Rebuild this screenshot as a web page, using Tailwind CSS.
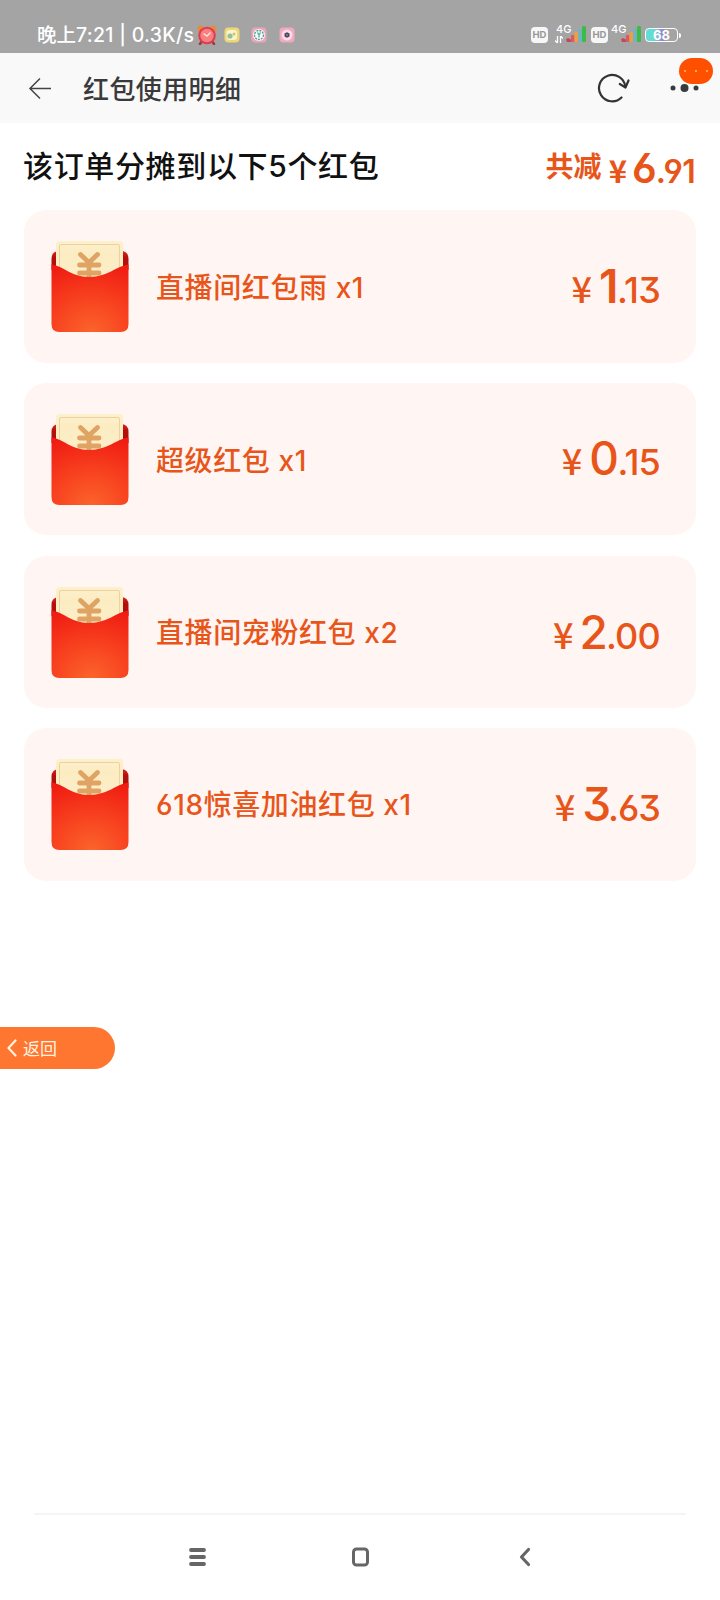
<!DOCTYPE html>
<html lang="zh-CN">
<head>
<meta charset="utf-8">
<title>红包使用明细</title>
<script src="https://cdn.jsdelivr.net/npm/@tailwindcss/browser@4"></script>
</head>
<body class="bg-white">
<svg width="0" height="0" class="absolute">
  <defs>
    <radialGradient id="red" cx="0.52" cy="1" r="1.05"><stop offset="0" stop-color="#fb642b"/><stop offset="0.45" stop-color="#f84420"/><stop offset="1" stop-color="#f01c12"/></radialGradient>
    <linearGradient id="paper" x1="0" y1="0" x2="0" y2="1"><stop offset="0" stop-color="#fdf0cc"/><stop offset="0.3" stop-color="#fcecc2"/><stop offset="1" stop-color="#ffefcb"/></linearGradient>
    <linearGradient id="back" x1="0" y1="0" x2="0" y2="1"><stop offset="0" stop-color="#dd2518"/><stop offset="0.35" stop-color="#b3100c"/><stop offset="1" stop-color="#b30d0b"/></linearGradient>
    <symbol id="envelope" viewBox="0 0 80 94">
      <path d="M1.500 30V19Q1.500 11 9.500 11H70.500Q78.500 11 78.500 19V30Z" fill="url(#back)"/>
      <path d="M6 5Q6 1 10 1H70Q73 1 73 4V45H6Z" fill="url(#paper)"/>
      <path d="M9.5 30V6Q9.5 4.500 11 4.500H68Q69.500 4.500 69.500 6V30" fill="none" stroke="#ead3a0" stroke-width="1"/>
      <path d="M30.500 14.500L39 22.500L47.500 14.500M29.500 25H49M29.500 33H49M39 23V40" fill="none" stroke="#dfa364" stroke-width="4.800" stroke-linecap="round" stroke-linejoin="round"/>
      <path d="M1.500 24.500C14 26 20 36.500 39 37C59 36.500 66 26 78.500 24.500V84Q78.500 92 70.500 92H9.500Q1.500 92 1.500 84Z" fill="url(#red)"/>
    </symbol>
    <symbol id="signal" viewBox="0 0 20 18">
      <path d="M0 14.500L2 13L5 14.500V17H1Z" fill="#c6465c"/>
      <rect x="5" y="10" width="3.500" height="7" rx="1" fill="#d95b61"/>
      <rect x="8.500" y="7" width="3.500" height="10" rx="1" fill="#ef9f3f"/>
      <rect x="12.200" y="4" width="3.500" height="13" rx="1" fill="#6bb3c9"/>
      <rect x="16" y="1" width="4" height="16" rx="1.500" fill="#3cbb45"/>
    </symbol>
  </defs>
</svg>
<div class="w-[720px] h-[1600px] flex flex-col overflow-hidden whitespace-nowrap font-['Inter','Noto_Sans_CJK_SC',sans-serif]">
  <!-- status bar -->
  <div class="h-[53px] bg-[#a4a4a4] flex items-center pt-[17px] pl-[37px] pr-[39px] text-white shrink-0">
    <div class="w-[160px] text-[19.5px] leading-[30px] pb-px font-medium font-['Noto_Sans_CJK_SC',sans-serif]"><span>晚上</span><span class="font-['Inter'] text-[19.5px] tracking-[0.300px]">7:21 | 0.3K/s</span></div>
    <svg class="w-5 h-5" viewBox="0 0 20 20"><circle cx="4" cy="4" r="3.500" fill="#e58a45"/><circle cx="16" cy="4" r="3.500" fill="#e58a45"/><path d="M5 16L3 19M15 16L17 19" stroke="#9c3a3c" stroke-width="2.500" stroke-linecap="round"/><circle cx="10" cy="10.500" r="8.800" fill="#dc3f49"/><circle cx="10" cy="10.500" r="6.700" fill="#fa7f83"/><path d="M6.500 8.500L10 11L13.500 7.500" fill="none" stroke="#ffe3d8" stroke-width="1.400"/></svg>
    <svg class="w-4 h-4 ml-[7px]" viewBox="0 0 16 16"><rect x=".5" y=".5" width="15" height="15" rx="4" fill="#ecd779"/><rect x="2.500" y="3" width="10.500" height="10" rx="3" fill="#fbf4c4"/><circle cx="6" cy="9" r="2.600" fill="#97bd9f"/><circle cx="10" cy="7" r="1.500" fill="#b9c98c"/></svg>
    <svg class="w-4 h-4 ml-[11px]" viewBox="0 0 16 16"><rect x=".5" y=".5" width="15" height="15" rx="4" fill="#e9a6bd"/><circle cx="8" cy="8" r="6" fill="#f7f8f7"/><circle cx="8" cy="8" r="4.500" fill="none" stroke="#68998f" stroke-width="1.400" stroke-dasharray="2 1"/><path d="M6.500 5.500L8 8L9.500 5.500M8 8V10.500" fill="none" stroke="#46b7a7" stroke-width="1.400"/></svg>
    <svg class="w-4 h-4 ml-[12px]" viewBox="0 0 16 16"><rect x=".5" y=".5" width="15" height="15" rx="4" fill="#f2a8bf"/><circle cx="8" cy="8" r="5.500" fill="#fbdde8"/><path d="M8 5.200L10.500 6.500V9.500L8 10.800L5.500 9.500V6.500Z" fill="#514263"/><circle cx="8" cy="8" r=".7" fill="#d9bddc"/></svg>
    <div class="ml-auto w-[17px] h-[16px] rounded-[4px] bg-[#f7f7f7] text-[#999] text-[9.500px] leading-[16px] text-center font-bold">HD</div>
    <div class="ml-[7px] w-[31px] h-[18px] relative shrink-0">
      <svg class="absolute right-0 bottom-[1px] w-5 h-[18px]"><use href="#signal"/></svg>
      <svg class="absolute left-0 bottom-[1px] w-2 h-[7px]" viewBox="0 0 8 7"><path d="M2.500 0V7L0 4.500M5.500 7V0L8 2.500" fill="none" stroke="#fff" stroke-width="1.300"/></svg>
      <span class="absolute left-[1px] -top-[2px] text-[11px] leading-[11px] font-medium">4G</span>
    </div>
    <div class="ml-[5px] w-[17px] h-[16px] rounded-[4px] bg-[#f7f7f7] text-[#999] text-[9.500px] leading-[16px] text-center font-bold">HD</div>
    <div class="ml-[2px] w-[31px] h-[18px] relative shrink-0">
      <svg class="absolute right-0 bottom-[1px] w-5 h-[18px]"><use href="#signal"/></svg>
      <span class="absolute left-[1px] -top-[2px] text-[11px] leading-[11px] font-medium">4G</span>
    </div>
    <div class="ml-[4px] w-[33px] h-[14px] rounded-[4px] border border-white bg-linear-to-r from-[#63ddd3] from-25% via-[#8f7fd0] via-55% to-[#a4a4a4] to-65% text-[13px] leading-[12px] font-bold text-center">68</div>
    <div class="w-[2px] h-[5px] ml-[1px] bg-white rounded-r"></div>
  </div>
  <!-- title bar -->
  <div class="h-[70px] bg-[#f9f9f9] flex items-center pl-[28px] shrink-0 relative">
    <svg class="w-6 h-6" viewBox="0 0 24 24" fill="none" stroke="#444" stroke-width="1.500"><path d="M23 12.500H2M12 2.500L2 12.500L12 22.500"/></svg>
    <h1 class="ml-[31px] pt-[3px] text-[26px] tracking-[0.400px] leading-[36px] text-[#3a3a3a] font-medium">红包使用明细</h1>
    <svg class="ml-auto mr-[39px] w-[34px] h-[32px]" viewBox="0 0 34 32" fill="none" stroke="#333" stroke-width="2.200" stroke-linecap="round" stroke-linejoin="round"><path d="M24.500 25.500A13.200 13.200 0 1 1 28.300 14.500"/><path d="M22.800 12L28.500 15.500L31.500 8.500"/></svg>
    <svg class="w-[30px] h-[10px] mr-[20px]" viewBox="0 0 30 10" fill="#373b3b"><circle cx="3" cy="5" r="2.500"/><circle cx="14.500" cy="5" r="4"/><circle cx="26" cy="5" r="2.500"/></svg>
    <div class="absolute left-[679px] top-[5px] w-[34px] h-[26px] rounded-full bg-[#ff5000] flex items-center justify-center gap-[9px]"><i class="w-[2px] h-[2px] rounded-full bg-[#ffc66a]"></i><i class="w-[2px] h-[2px] rounded-full bg-[#ffc66a]"></i><i class="w-[2px] h-[2px] rounded-full bg-[#ffc66a]"></i></div>
  </div>
  <!-- summary -->
  <div class="h-[87px] flex items-center justify-between pl-[23px] pr-[25px] shrink-0">
    <h2 class="pb-[2px] text-[30px] tracking-[0.650px] leading-[40px] font-medium text-[#111]">该订单分摊到以下5个红包</h2>
    <div class="flex items-center text-[#e8551a] font-semibold [font-feature-settings:'cv03','cv04','cv09']">
      <span class="text-[28px] leading-[36px] font-bold">共减</span>
      <div class="flex items-baseline pt-[3px]"><span class="ml-[7px] font-['Noto_Sans_CJK_SC'] text-[31px] leading-none font-bold">¥</span><span class="ml-[5px] text-[41px] leading-none tracking-[-1px]">6</span><span class="text-[32px] leading-none tracking-[-0.700px]">.91</span></div>
    </div>
  </div>
  <!-- red packets -->
  <div class="flex flex-col px-6 text-[#e8551a] font-medium [font-feature-settings:'cv03','cv04','cv09']">
    <div class="h-[153px] rounded-[22px] bg-[#fff5f3] flex items-center pl-[26px] pr-[36px]">
      <svg class="w-20 h-[94px]"><use href="#envelope"/></svg><span class="ml-[26px] pt-[2px] text-[28px] tracking-[0.600px]">直播间红包雨 x1</span>
      <div class="ml-auto flex items-baseline pb-[2px]"><span class="font-['Noto_Sans_CJK_SC'] text-[36px] leading-none">¥</span><span class="ml-[7px] text-[46px] leading-none tracking-[-1.500px] font-semibold">1</span><span class="text-[36px] leading-none tracking-[-0.800px]">.13</span></div>
    </div>
    <div class="mt-5 h-[152px] rounded-[22px] bg-[#fff5f3] flex items-center pl-[26px] pr-[36px]">
      <svg class="mt-px w-20 h-[94px]"><use href="#envelope"/></svg><span class="ml-[26px] pt-[3px] text-[28px] tracking-[0.600px]">超级红包 x1</span>
      <div class="ml-auto flex items-baseline pb-[2px]"><span class="font-['Noto_Sans_CJK_SC'] text-[36px] leading-none">¥</span><span class="ml-[7px] text-[46px] leading-none tracking-[-1.500px]">0</span><span class="text-[36px] leading-none tracking-[-0.800px]">.15</span></div>
    </div>
    <div class="mt-[21px] h-[152px] rounded-[22px] bg-[#fff5f3] flex items-center pl-[26px] pr-[36px]">
      <svg class="mt-px w-20 h-[94px]"><use href="#envelope"/></svg><span class="ml-[26px] pt-[2px] text-[28px] tracking-[0.600px]">直播间宠粉红包 x2</span>
      <div class="ml-auto flex items-baseline"><span class="font-['Noto_Sans_CJK_SC'] text-[36px] leading-none">¥</span><span class="ml-[6px] text-[46px] leading-none tracking-[-2px]">2</span><span class="text-[36px] leading-none tracking-[-0.800px]">.00</span></div>
    </div>
    <div class="mt-5 h-[153px] rounded-[22px] bg-[#fff5f3] flex items-center pl-[26px] pr-[36px]">
      <svg class="w-20 h-[94px]"><use href="#envelope"/></svg><span class="ml-[26px] pt-[1px] text-[28px] tracking-[0.600px]">618惊喜加油红包 x1</span>
      <div class="ml-auto flex items-baseline pb-px"><span class="font-['Noto_Sans_CJK_SC'] text-[36px] leading-none">¥</span><span class="ml-[7px] text-[46px] leading-none tracking-[-3px]">3</span><span class="text-[36px] leading-none tracking-[-1px]">.63</span></div>
    </div>
  </div>
  <!-- back pill -->
  <div class="mt-[146px] w-[115px] h-[42px] rounded-r-full bg-[#ff7630] flex items-center pl-[7px] text-[#fff3e0] shrink-0">
    <svg class="w-[10px] h-[18px]" viewBox="0 0 10 18" fill="none" stroke="currentColor" stroke-width="2.200" stroke-linecap="round" stroke-linejoin="round"><path d="M8.500 1.500L1.500 9L8.500 16.500"/></svg>
    <span class="ml-[6px] pt-px text-[17px] leading-[24px]">返回</span>
  </div>
  <!-- system navigation -->
  <div class="mt-auto h-[87px] shrink-0">
    <div class="mx-[34px] h-[2px] bg-[#f5f5f5]"></div>
    <div class="flex items-center h-[83px] pl-[189px]">
      <svg class="w-[17px] h-[20px]" viewBox="0 0 17 20" stroke="#666" stroke-width="3.800" stroke-linecap="round"><path d="M2 3H15M2 10H15M2 17H15"/></svg>
      <svg class="ml-[145px] w-[19px] h-[22px]" viewBox="0 0 19 22" fill="none" stroke="#666" stroke-width="3"><rect x="2.500" y="3" width="14" height="16" rx="3"/></svg>
      <svg class="ml-[149px] w-[12px] h-[20px]" viewBox="0 0 12 20" fill="none" stroke="#666" stroke-width="3.200" stroke-linecap="round" stroke-linejoin="round"><path d="M9.500 2.500L2.500 10L9.500 17.500"/></svg>
    </div>
  </div>
</div>
</body>
</html>
